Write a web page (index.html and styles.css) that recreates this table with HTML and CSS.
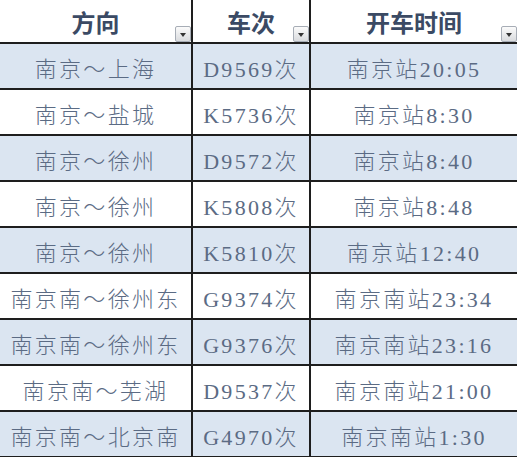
FILE: index.html
```html
<!DOCTYPE html>
<html lang="zh">
<head>
<meta charset="utf-8">
<title>列车时刻</title>
<link rel="stylesheet" href="styles.css">
</head>
<body>
<div class="sheet">
  <div class="cell head">方向<span class="filter"></span></div>
  <div class="cell head">车次<span class="filter"></span></div>
  <div class="cell head last">开车时间<span class="filter"></span></div>

  <div class="cell blue">南京～上海</div>
  <div class="cell blue">D9569次</div>
  <div class="cell blue last">南京站20:05</div>

  <div class="cell">南京～盐城</div>
  <div class="cell">K5736次</div>
  <div class="cell last">南京站8:30</div>

  <div class="cell blue">南京～徐州</div>
  <div class="cell blue">D9572次</div>
  <div class="cell blue last">南京站8:40</div>

  <div class="cell">南京～徐州</div>
  <div class="cell">K5808次</div>
  <div class="cell last">南京站8:48</div>

  <div class="cell blue">南京～徐州</div>
  <div class="cell blue">K5810次</div>
  <div class="cell blue last">南京站12:40</div>

  <div class="cell">南京南～徐州东</div>
  <div class="cell">G9374次</div>
  <div class="cell last">南京南站23:34</div>

  <div class="cell blue">南京南～徐州东</div>
  <div class="cell blue">G9376次</div>
  <div class="cell blue last">南京南站23:16</div>

  <div class="cell">南京南～芜湖</div>
  <div class="cell">D9537次</div>
  <div class="cell last">南京南站21:00</div>

  <div class="cell blue">南京南～北京南</div>
  <div class="cell blue">G4970次</div>
  <div class="cell blue last">南京南站1:30</div>
</div>
</body>
</html>
```
FILE: styles.css
```css
html, body {
  margin: 0;
  padding: 0;
  background: #ffffff;
}

.sheet {
  display: grid;
  grid-template-columns: 193px 118px 206px;
  grid-template-rows: 44px repeat(9, 46px);
  width: 517px;
}

.cell {
  box-sizing: border-box;
  display: flex;
  align-items: center;
  justify-content: center;
  border-right: 2px solid #1e1e1e;
  border-bottom: 2px solid #1e1e1e;
  font-family: "Liberation Serif", "Noto Sans CJK SC", serif;
  font-size: 22px;
  font-weight: 300;
  letter-spacing: 2.3px;
  color: #5b6b84;
  background: #ffffff;
  white-space: nowrap;
  padding-top: 1px;
}

.cell.last {
  border-right: none;
}

.cell.blue {
  background: #dbe5f1;
}

.cell.head {
  position: relative;
  font-family: "Noto Sans CJK SC", sans-serif;
  font-weight: 700;
  font-size: 24px;
  letter-spacing: 0;
  color: #3b4a64;
  padding-top: 1px;
}

.filter {
  position: absolute;
  right: 0;
  bottom: 0;
  width: 16px;
  height: 16px;
  box-sizing: border-box;
  border: 1px solid #a7adb6;
  border-radius: 2px;
  background: linear-gradient(#fbfbfb, #d9dbde);
  display: flex;
  align-items: center;
  justify-content: center;
}

.filter::after {
  content: "";
  width: 0;
  height: 0;
  border-left: 3.5px solid transparent;
  border-right: 3.5px solid transparent;
  border-top: 4px solid #333333;
  margin-top: 2px;
}
```
